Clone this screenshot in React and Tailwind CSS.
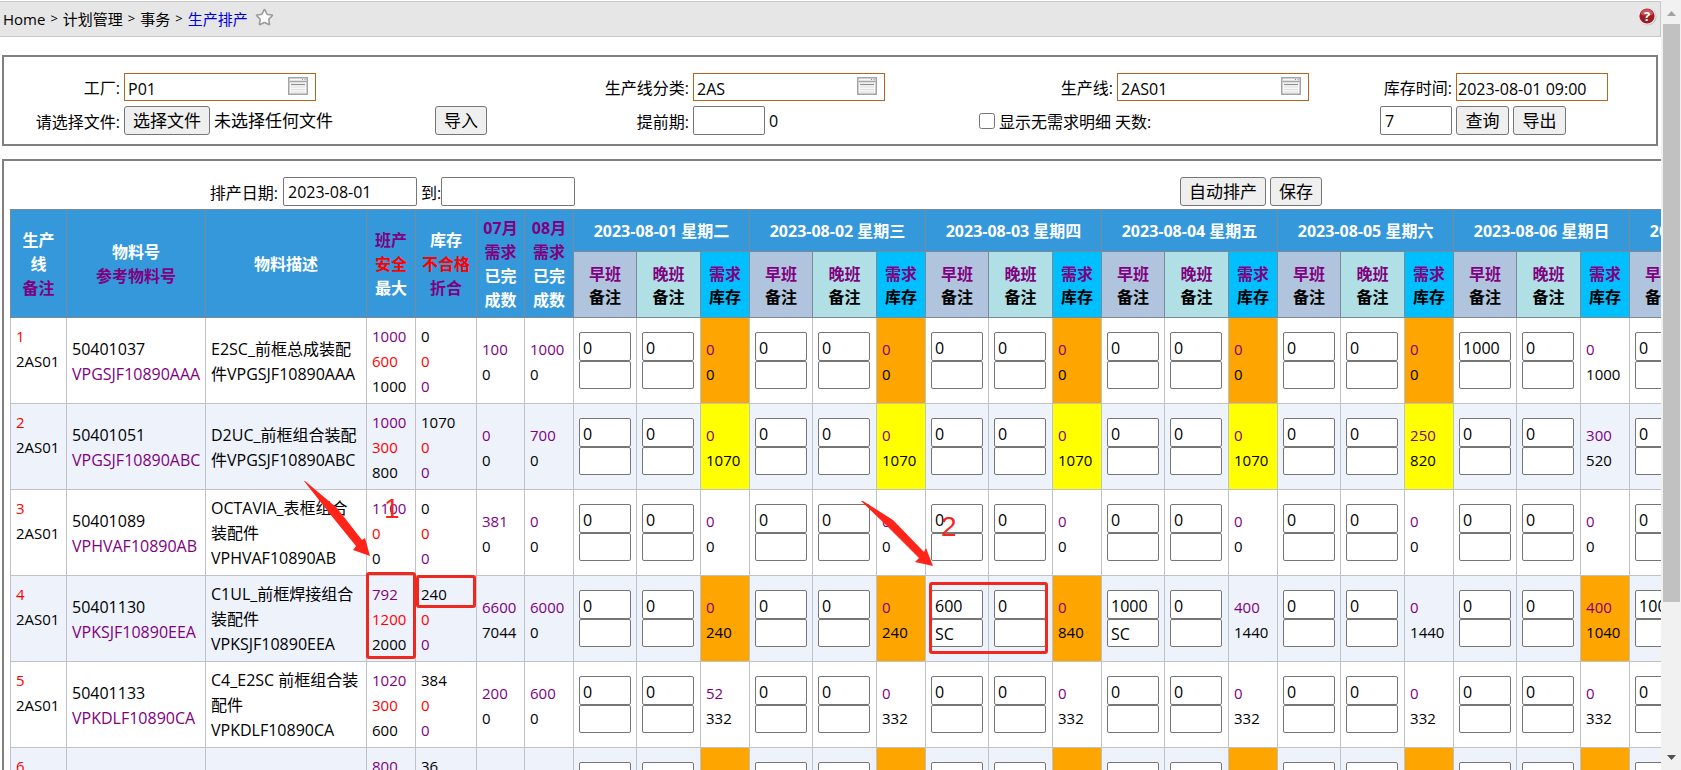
import { useState } from "react";
import { Star } from "lucide-react";

const days = [
  "2023-08-01 星期二",
  "2023-08-02 星期三",
  "2023-08-03 星期四",
  "2023-08-04 星期五",
  "2023-08-05 星期六",
  "2023-08-06 星期日",
  "2023-08-07 星期一",
];

// plan entries: [early, late, demand, stock, level, early remark]
const rows = [
  {
    line: "2AS01",
    item: "50401037",
    ref: "VPGSJF10890AAA",
    desc: ["E2SC_前框总成装配", "件VPGSJF10890AAA"],
    capacity: ["1000", "600", "1000"],
    stock: ["0", "0", "0"],
    july: ["100", "0"],
    august: ["1000", "0"],
    plan: [
      ["0", "0", "0", "0", "short"],
      ["0", "0", "0", "0", "short"],
      ["0", "0", "0", "0", "short"],
      ["0", "0", "0", "0", "short"],
      ["0", "0", "0", "0", "short"],
      ["1000", "0", "0", "1000"],
      ["0", "0", "0", "1000"],
    ],
  },
  {
    line: "2AS01",
    item: "50401051",
    ref: "VPGSJF10890ABC",
    desc: ["D2UC_前框组合装配", "件VPGSJF10890ABC"],
    capacity: ["1000", "300", "800"],
    stock: ["1070", "0", "0"],
    july: ["0", "0"],
    august: ["700", "0"],
    plan: [
      ["0", "0", "0", "1070", "over"],
      ["0", "0", "0", "1070", "over"],
      ["0", "0", "0", "1070", "over"],
      ["0", "0", "0", "1070", "over"],
      ["0", "0", "250", "820", "over"],
      ["0", "0", "300", "520"],
      ["0", "0", "0", "520"],
    ],
  },
  {
    line: "2AS01",
    item: "50401089",
    ref: "VPHVAF10890AB",
    desc: ["OCTAVIA_表框组合", "装配件", "VPHVAF10890AB"],
    capacity: ["1100", "0", "0"],
    stock: ["0", "0", "0"],
    july: ["381", "0"],
    august: ["0", "0"],
    plan: [
      ["0", "0", "0", "0"],
      ["0", "0", "0", "0"],
      ["0", "0", "0", "0"],
      ["0", "0", "0", "0"],
      ["0", "0", "0", "0"],
      ["0", "0", "0", "0"],
      ["0", "0", "0", "0"],
    ],
  },
  {
    line: "2AS01",
    item: "50401130",
    ref: "VPKSJF10890EEA",
    desc: ["C1UL_前框焊接组合", "装配件", "VPKSJF10890EEA"],
    capacity: ["792", "1200", "2000"],
    stock: ["240", "0", "0"],
    july: ["6600", "7044"],
    august: ["6000", "0"],
    plan: [
      ["0", "0", "0", "240", "short"],
      ["0", "0", "0", "240", "short"],
      ["600", "0", "0", "840", "short", "SC"],
      ["1000", "0", "400", "1440", "", "SC"],
      ["0", "0", "0", "1440"],
      ["0", "0", "400", "1040", "short"],
      ["1000", "0", "0", "2040"],
    ],
  },
  {
    line: "2AS01",
    item: "50401133",
    ref: "VPKDLF10890CA",
    desc: ["C4_E2SC 前框组合装", "配件", "VPKDLF10890CA"],
    capacity: ["1020", "300", "600"],
    stock: ["384", "0", "0"],
    july: ["200", "0"],
    august: ["600", "0"],
    plan: [
      ["0", "0", "52", "332"],
      ["0", "0", "0", "332"],
      ["0", "0", "0", "332"],
      ["0", "0", "0", "332"],
      ["0", "0", "0", "332"],
      ["0", "0", "0", "332"],
      ["0", "0", "0", "332"],
    ],
  },
  {
    line: "2AS01",
    item: "",
    ref: "",
    desc: [],
    capacity: ["800", "0", "0"],
    stock: ["36", "0", "0"],
    july: [],
    august: [],
    plan: [
      ["", "", "", "", "short"],
      ["", "", "", "", "short"],
      ["", "", "", "", "short"],
      ["", "", "", "", "short"],
      ["", "", "", "", "short"],
      ["", "", "", "", "short"],
      ["", "", "", "", "short"],
    ],
  },
];

const levelColors = {
  short: "bg-[#ffa500]",
  over: "bg-[#ffff00]",
};

const inputClass = "border border-[#767676] rounded-xs bg-white text-base outline-none";
const buttonClass =
  "border border-[#767676] rounded-[3px] bg-[#efefef] text-[17px] leading-none whitespace-nowrap hover:bg-[#e5e5e5]";
const headClass = "border border-[#7b8a98]";
const cellClass = "border border-[#bfc3c9] px-[5px] pt-0.5";

function HelpIcon() {
  return (
    <svg viewBox="0 0 20 20" className="w-5 h-5">
      <circle cx="10.5" cy="10.5" r="9" fill="#b9b9b9" />
      <circle cx="10" cy="10" r="8.8" fill="#f3e9e9" />
      <circle cx="10" cy="10" r="7.6" fill="#9c1c24" />
      <path d="M3.6 8a6.6 6.6 0 0 1 12.8 0c-3 2-9.8 2-12.8 0z" fill="#c2555b" />
      <text x="10" y="14.5" textAnchor="middle" fontSize="13" fontWeight="700" fill="#fff">
        ?
      </text>
    </svg>
  );
}

function PickerIcon() {
  return (
    <svg viewBox="0 0 20 18" className="w-5 h-[18px]">
      <rect x="0.75" y="0.75" width="18.5" height="16.5" fill="#f8f8f8" stroke="#a3a3a3" strokeWidth="1.5" />
      <path d="M1.5 4.5h17" stroke="#a3a3a3" strokeWidth="1.5" />
      <path d="M14 2.5h1M16.5 2.5h1" stroke="#8a8a8a" />
      <path d="M3 7.5h14" stroke="#8f8f8f" strokeWidth="1.2" />
      <path d="M3 10h14M3 12.5h14M3 15h14" stroke="#dcdcdc" />
    </svg>
  );
}

function PickerField({ id, value, onChange }) {
  return (
    <div className="flex items-center w-48 h-7 border border-[#b5651d] bg-white px-[3px]">
      <input
        id={id}
        value={value}
        onChange={(e) => onChange(e.target.value)}
        className="flex-1 min-w-0 pt-1 text-base leading-6 outline-none"
      />
      <button type="button" aria-label="选择" className="mr-1 pb-0.5">
        <PickerIcon />
      </button>
    </div>
  );
}

function Breadcrumb() {
  return (
    <header className="flex justify-between h-9 mt-px px-[3px] border border-l-0 border-[#c8c8c8] bg-[#e6e6e6]">
      <nav className="flex items-center gap-[5px] text-[15px]">
        <a href="#">Home</a>
        <span className="text-[13px]">&gt;</span>
        <a href="#">计划管理</a>
        <span className="text-[13px]">&gt;</span>
        <a href="#">事务</a>
        <span className="text-[13px]">&gt;</span>
        <a href="#" className="text-[#0000e0]">生产排产</a>
        <button type="button" aria-label="收藏" className="pb-1 pl-0.5">
          <Star className="w-[19px] h-[19px] text-[#9a9a9a] fill-white" strokeWidth={2} />
        </button>
      </nav>
      <button type="button" aria-label="帮助" className="self-start mt-1">
        <HelpIcon />
      </button>
    </header>
  );
}

function FilterPanel() {
  const [plant, setPlant] = useState("P01");
  const [lineType, setLineType] = useState("2AS");
  const [line, setLine] = useState("2AS01");
  const [stockTime, setStockTime] = useState("2023-08-01 09:00");
  const [leadTime, setLeadTime] = useState("");
  const [dayCount, setDayCount] = useState("7");
  const [showAll, setShowAll] = useState(false);

  return (
    <section className="mt-[18px] ml-[2px] mr-[3px] border-2 border-[#808080] pt-4 pb-[9px]">
      <div className="grid grid-cols-[116px_307fr_254fr_282fr_134px_259fr_72px_200fr] gap-x-1 gap-y-[5px] items-center text-base whitespace-nowrap">
        <label htmlFor="plant" className="pt-0.5 text-right">工厂:</label>
        <PickerField id="plant" value={plant} onChange={setPlant} />
        <label htmlFor="lineType" className="pt-0.5 text-right">生产线分类:</label>
        <PickerField id="lineType" value={lineType} onChange={setLineType} />
        <label htmlFor="line" className="pt-0.5 text-right">生产线:</label>
        <PickerField id="line" value={line} onChange={setLine} />
        <label htmlFor="stockTime" className="pt-0.5 text-right">库存时间:</label>
        <input
          id="stockTime"
          value={stockTime}
          onChange={(e) => setStockTime(e.target.value)}
          className="w-[152px] h-7 border border-[#b5651d] px-px pt-1 text-base outline-none"
        />

        <label htmlFor="file" className="pt-0.5 text-right">请选择文件:</label>
        <div className="flex items-center gap-1">
          <input id="file" type="file" className="sr-only" />
          <label htmlFor="file" className={`${buttonClass} flex items-center justify-center w-[86px] h-[29px]`}>
            选择文件
          </label>
          <span className="text-[17px]">未选择任何文件</span>
        </div>
        <div className="flex items-center justify-between">
          <button type="button" className={`${buttonClass} w-[52px] h-[29px]`}>导入</button>
          <label htmlFor="leadTime" className="pt-0.5">提前期:</label>
        </div>
        <div className="flex items-center gap-1">
          <input
            id="leadTime"
            value={leadTime}
            onChange={(e) => setLeadTime(e.target.value)}
            className={`${inputClass} w-[72px] h-[29px] px-1`}
          />
          <span>0</span>
        </div>
        <div className="col-span-2 flex items-center gap-1">
          <input
            id="showAll"
            type="checkbox"
            checked={showAll}
            onChange={(e) => setShowAll(e.target.checked)}
            className="w-4 h-4"
          />
          <label htmlFor="showAll" className="pt-0.5">显示无需求明细</label>
          <label htmlFor="dayCount" className="pt-0.5">天数:</label>
        </div>
        <input
          id="dayCount"
          value={dayCount}
          onChange={(e) => setDayCount(e.target.value)}
          className={`${inputClass} w-[72px] h-[29px] px-1`}
        />
        <div className="flex gap-1">
          <button type="button" className={`${buttonClass} w-[53px] h-[29px]`}>查询</button>
          <button type="button" className={`${buttonClass} w-[53px] h-[29px]`}>导出</button>
        </div>
      </div>
    </section>
  );
}

function Toolbar() {
  const [from, setFrom] = useState("2023-08-01");
  const [to, setTo] = useState("");

  return (
    <div className="grid grid-cols-[268px_1fr_480px] gap-x-[5px] items-center whitespace-nowrap text-base">
      <label htmlFor="from" className="pt-0.5 text-right">排产日期:</label>
      <div className="flex items-center">
        <input
          id="from"
          value={from}
          onChange={(e) => setFrom(e.target.value)}
          className={`${inputClass} w-[134px] h-[29px] px-1`}
        />
        <label htmlFor="to" className="ml-1 pt-0.5">到:</label>
        <input
          id="to"
          value={to}
          onChange={(e) => setTo(e.target.value)}
          className={`${inputClass} w-[134px] h-[29px] px-1`}
        />
      </div>
      <div className="flex gap-1">
        <button type="button" className={`${buttonClass} w-[86px] h-[29px]`}>自动排产</button>
        <button type="button" className={`${buttonClass} w-[52px] h-[29px]`}>保存</button>
      </div>
    </div>
  );
}

function ShiftInputs({ value, remark = "", label }) {
  return (
    <div className="flex flex-col">
      <input defaultValue={value} aria-label={label} className={`${inputClass} w-[52px] h-[29px] pt-0.5 px-[3px]`} />
      <input defaultValue={remark} aria-label={`${label}备注`} className={`${inputClass} w-[52px] h-7 pt-0.5 px-[3px]`} />
    </div>
  );
}

function PlanTable() {
  return (
    <table className="table-fixed border-collapse w-[1796px] mt-[3px] text-[15px] leading-[25px] whitespace-nowrap">
      <colgroup>
        <col className="w-[56px]" />
        <col className="w-[139px]" />
        <col className="w-[161px]" />
        <col className="w-[49px]" />
        <col className="w-[61px]" />
        <col className="w-[48px]" />
        <col className="w-[49px]" />
        {days.map((day) => [
          <col key={`${day}-early`} className="w-[63px]" />,
          <col key={`${day}-late`} className="w-[64px]" />,
          <col key={`${day}-stock`} className="w-[49px]" />,
        ])}
      </colgroup>
      <thead className="bg-[#3498db] text-white text-base leading-6">
        <tr className="h-[42px]">
          <th rowSpan={2} className={headClass}>
            生产<br />线<br /><span className="text-[#800080]">备注</span>
          </th>
          <th rowSpan={2} className={headClass}>
            物料号<br /><span className="text-[#800080]">参考物料号</span>
          </th>
          <th rowSpan={2} className={headClass}>物料描述</th>
          <th rowSpan={2} className={headClass}>
            <span className="text-[#800080]">班产</span><br />
            <span className="text-[#ff0000]">安全</span><br />最大
          </th>
          <th rowSpan={2} className={headClass}>
            库存<br /><span className="text-[#ff0000]">不合格</span><br />
            <span className="text-[#800080]">折合</span>
          </th>
          <th rowSpan={2} className={headClass}>
            <span className="text-[#800080]">07月<br />需求</span><br />已完<br />成数
          </th>
          <th rowSpan={2} className={headClass}>
            <span className="text-[#800080]">08月<br />需求</span><br />已完<br />成数
          </th>
          {days.map((day) => (
            <th key={day} colSpan={3} className={headClass}>{day}</th>
          ))}
        </tr>
        <tr className="h-[66px] text-black leading-[23px]">
          {days.map((day) => [
            <th key={`${day}-early`} className={`${headClass} pt-0.5 bg-[#b0c4de]`}>
              <span className="text-[#800080]">早班</span><br />备注
            </th>,
            <th key={`${day}-late`} className={`${headClass} pt-0.5 bg-[#b0e0e6]`}>
              <span className="text-[#800080]">晚班</span><br />备注
            </th>,
            <th key={`${day}-stock`} className={`${headClass} pt-0.5 bg-[#00bfff]`}>
              <span className="text-[#800080]">需求</span><br />库存
            </th>,
          ])}
        </tr>
      </thead>
      <tbody>
        {rows.map((row, i) => (
          <tr key={i} className="h-[86px] even:bg-[#edf2fb]">
            <td className="border border-[#bfc3c9] px-[5px] py-[6px] align-top">
              <span className="text-[#ff0000]">{i + 1}</span><br />{row.line}
            </td>
            <td className={`${cellClass} text-base leading-[25px]`}>
              {row.item}<br /><span className="text-[#800080]">{row.ref}</span>
            </td>
            <td className={`${cellClass} text-base leading-[25px]`}>
              {row.desc.map((text) => <div key={text}>{text}</div>)}
            </td>
            <td className={cellClass}>
              <div className="text-[#800080]">{row.capacity[0]}</div>
              <div className="text-[#ff0000]">{row.capacity[1]}</div>
              <div>{row.capacity[2]}</div>
            </td>
            <td className={cellClass}>
              <div>{row.stock[0]}</div>
              <div className="text-[#ff0000]">{row.stock[1]}</div>
              <div className="text-[#800080]">{row.stock[2]}</div>
            </td>
            <td className={cellClass}>
              <div className="text-[#800080]">{row.july[0]}</div>
              <div>{row.july[1]}</div>
            </td>
            <td className={cellClass}>
              <div className="text-[#800080]">{row.august[0]}</div>
              <div>{row.august[1]}</div>
            </td>
            {row.plan.map(([early, late, demand, stock, level, remark], d) => [
              <td key={`${d}-early`} className="border border-[#bfc3c9] px-[5px]">
                <ShiftInputs value={early} remark={remark} label={`${days[d]} 早班`} />
              </td>,
              <td key={`${d}-late`} className="border border-[#bfc3c9] px-[5px]">
                <ShiftInputs value={late} label={`${days[d]} 晚班`} />
              </td>,
              <td key={`${d}-stock`} className={`${cellClass} ${levelColors[level] || ""}`}>
                <div className="text-[#800080]">{demand}</div>
                <div>{stock}</div>
              </td>,
            ])}
          </tr>
        ))}
      </tbody>
    </table>
  );
}

// red guide marks over the table
function Annotations() {
  return (
    <div className="absolute inset-0 pointer-events-none text-[#f0281e] text-[28px] leading-7 font-['Liberation_Sans',sans-serif]">
      <div className="absolute left-[366px] top-[572px] w-[50px] h-[87px] border-3 border-[#ee2a20] rounded-[3px]" />
      <div className="absolute left-[416px] top-[575px] w-[60px] h-[33px] border-3 border-[#ee2a20] rounded-[3px]" />
      <div className="absolute left-[929px] top-[582px] w-[119px] h-[72px] border-3 border-[#ee2a20] rounded-[3px]" />
      <svg viewBox="0 0 66 76" className="absolute left-[304px] top-[481px] w-[66px] h-[76px]">
        <path d="M0 0 L1 0 L33 27 L58 59 L61 57 L66 75 L49 69 L52 65 L26 33 Z" fill="#ff2419" />
      </svg>
      <svg viewBox="0 0 73 66" className="absolute left-[861px] top-[501px] w-[73px] h-[66px]">
        <path d="M0 0 L2 0 L32 19 L63 51 L65 47 L72 65 L54 61 L58 57 L25 24 Z" fill="#ff2419" />
      </svg>
      <span className="absolute left-[384px] top-[495px]">1</span>
      <span className="absolute left-[941px] top-[513px]">2</span>
    </div>
  );
}

function Scrollbar() {
  return (
    <div className="flex flex-col items-center w-5 shrink-0 bg-[#f1f1f1]">
      <svg viewBox="0 0 17 24" className="w-[17px] h-6 shrink-0">
        <path d="M4 16h9l-4.5-5z" fill="#a3a3a3" />
      </svg>
      <div className="flex-1 w-[17px]">
        <div className="h-4/5 bg-[#c1c1c1]" />
      </div>
      <svg viewBox="0 0 17 24" className="w-[17px] h-6 shrink-0">
        <path d="M4 9h9l-4.5 5z" fill="#505050" />
      </svg>
    </div>
  );
}

export default function App() {
  return (
    <div className="relative flex h-screen overflow-hidden bg-white text-black font-['Open_Sans','Noto_Sans_CJK_SC',sans-serif]">
      <main className="flex-1 min-w-0 overflow-hidden">
        <Breadcrumb />
        <FilterPanel />
        <section className="w-max min-w-full mt-[13px] ml-[2px] border-2 border-[#808080] pt-4 pl-[6px]">
          <div className="w-[calc(100vw-31px)]">
            <Toolbar />
          </div>
          <PlanTable />
        </section>
      </main>
      <Scrollbar />
      <Annotations />
    </div>
  );
}
